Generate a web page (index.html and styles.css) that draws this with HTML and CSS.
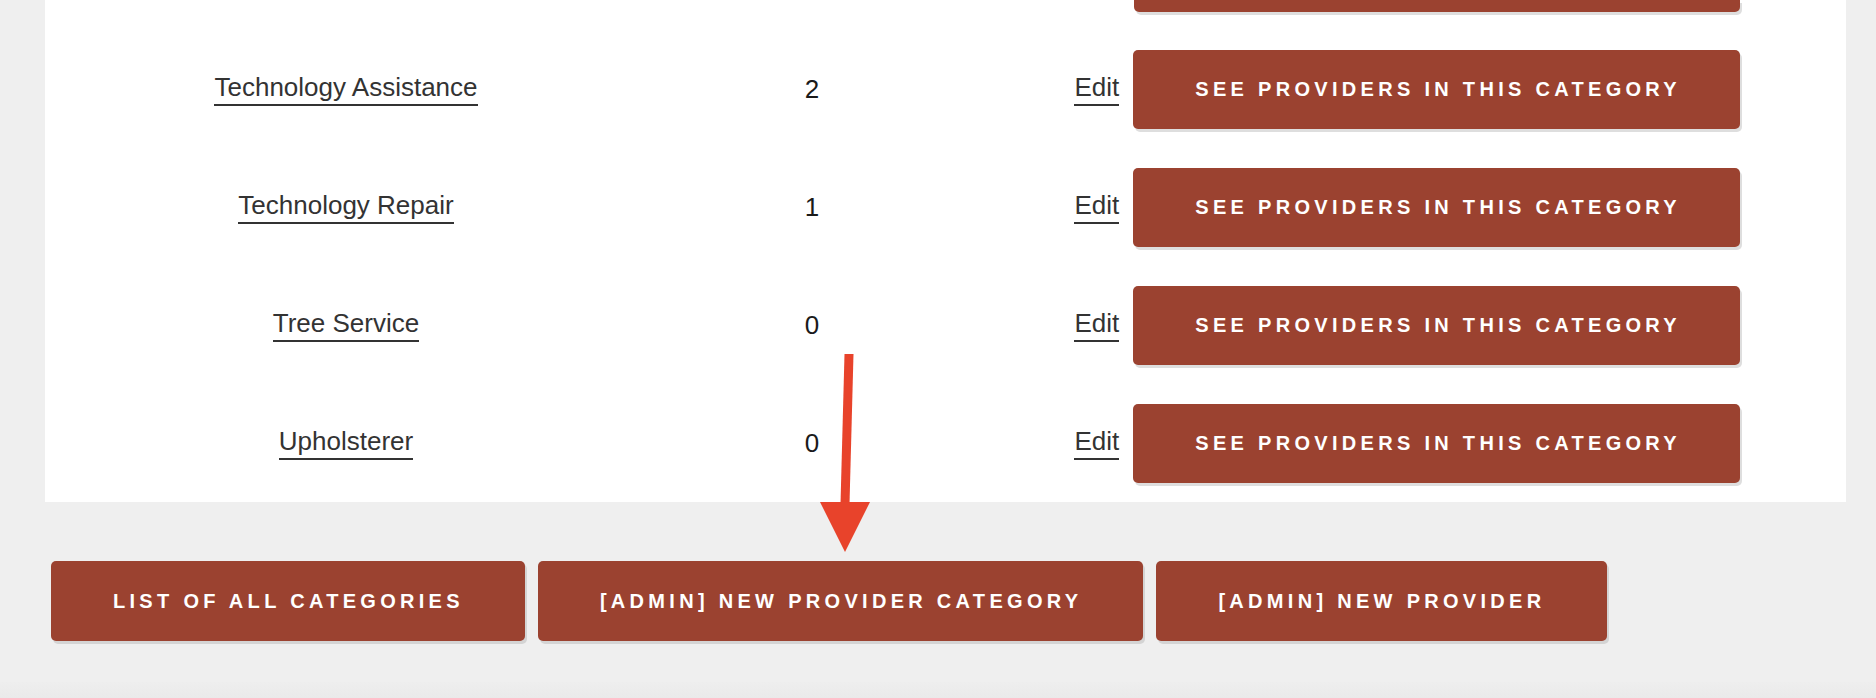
FILE: index.html
```html
<!DOCTYPE html>
<html lang="en">
<head>
    <meta charset="UTF-8">
    <meta name="viewport" content="width=device-width, initial-scale=1.0">
    <title>Provider categories</title>
    <link rel="stylesheet" href="styles.css">
</head>
<body>
    <div class="wrap">
        <div class="panel">
            <!-- tail of the previous row, scrolled past -->
            <div class="row row_cut">
                <div class="cell"></div>
                <div class="cell"></div>
                <div class="cell actions"><span class="btn btn_blank"></span></div>
            </div>
            <div class="row">
                <div class="cell name"><a href="#">Technology Assistance</a></div>
                <div class="cell count">2</div>
                <div class="cell actions"><a class="edit" href="#">Edit</a><a class="btn" href="#">See providers in this category</a></div>
            </div>
            <div class="row">
                <div class="cell name"><a href="#">Technology Repair</a></div>
                <div class="cell count">1</div>
                <div class="cell actions"><a class="edit" href="#">Edit</a><a class="btn" href="#">See providers in this category</a></div>
            </div>
            <div class="row">
                <div class="cell name"><a href="#">Tree Service</a></div>
                <div class="cell count">0</div>
                <div class="cell actions"><a class="edit" href="#">Edit</a><a class="btn" href="#">See providers in this category</a></div>
            </div>
            <div class="row">
                <div class="cell name"><a href="#">Upholsterer</a></div>
                <div class="cell count">0</div>
                <div class="cell actions"><a class="edit" href="#">Edit</a><a class="btn" href="#">See providers in this category</a></div>
            </div>
        </div>

        <div class="bottom_btns">
            <a class="btn" href="#">List of all categories</a>
            <a class="btn" href="#">[Admin] New provider category</a>
            <a class="btn" href="#">[Admin] New provider</a>
        </div>

        <div class="foot"></div>

        <!-- pointer to the new category button -->
        <svg class="arrow" width="60" height="200" viewBox="0 0 60 200">
            <line x1="33" y1="0" x2="29" y2="150" stroke="#e8432b" stroke-width="9"/>
            <polygon points="4,148 54,148 29,198" fill="#e8432b"/>
        </svg>
    </div>
</body>
</html>
```

FILE: styles.css
```css
*{margin:0;padding:0;box-sizing:border-box;}
body{background-color:#efefef;font-family:"Liberation Sans",Arial,sans-serif;color:#333;overflow:hidden;}
a{text-decoration:none;}
.wrap{position:relative;display:flow-root;}

.panel{width:1801px;margin:0 0 0 45px;background-color:#fff;}
.row{display:grid;grid-template-columns:602px 330px 1fr;height:118px;align-items:center;}
.row_cut{height:30px;align-items:end;}
.row_cut .actions{padding-bottom:18px;}
.cell{display:flex;justify-content:center;align-items:center;}
.name a{font-size:26px;line-height:29px;color:#333;padding-bottom:2px;border-bottom:2px solid #333;}
.count{font-size:26px;line-height:29px;color:#1a1a1a;}
.actions{justify-content:flex-end;padding-right:106px;gap:14px;}
.edit{font-size:26px;line-height:29px;color:#333;padding-bottom:2px;border-bottom:2px solid #333;}

.btn{display:inline-flex;align-items:center;justify-content:center;height:79px;padding:0 61px 0 62px;background-color:#9b4230;color:#fff;font-size:20px;font-weight:bold;letter-spacing:4.3px;text-transform:uppercase;border-radius:5px;box-shadow:2px 3px 0 #dedede;white-space:nowrap;}
.actions .btn{padding:0 59px 0 62px;}
.btn_blank{width:606px;height:12px;border-radius:0 0 5px 5px;}

.bottom_btns{display:flex;gap:13px;margin:59px 0 0 51px;}
.bottom_btns .btn{height:80px;box-shadow:2px 3px 0 #d4d4d4;}

.foot{height:20px;margin-top:41px;background:linear-gradient(#eeeeee,#e9e9e9);}

.arrow{position:absolute;left:816px;top:354px;}
```
